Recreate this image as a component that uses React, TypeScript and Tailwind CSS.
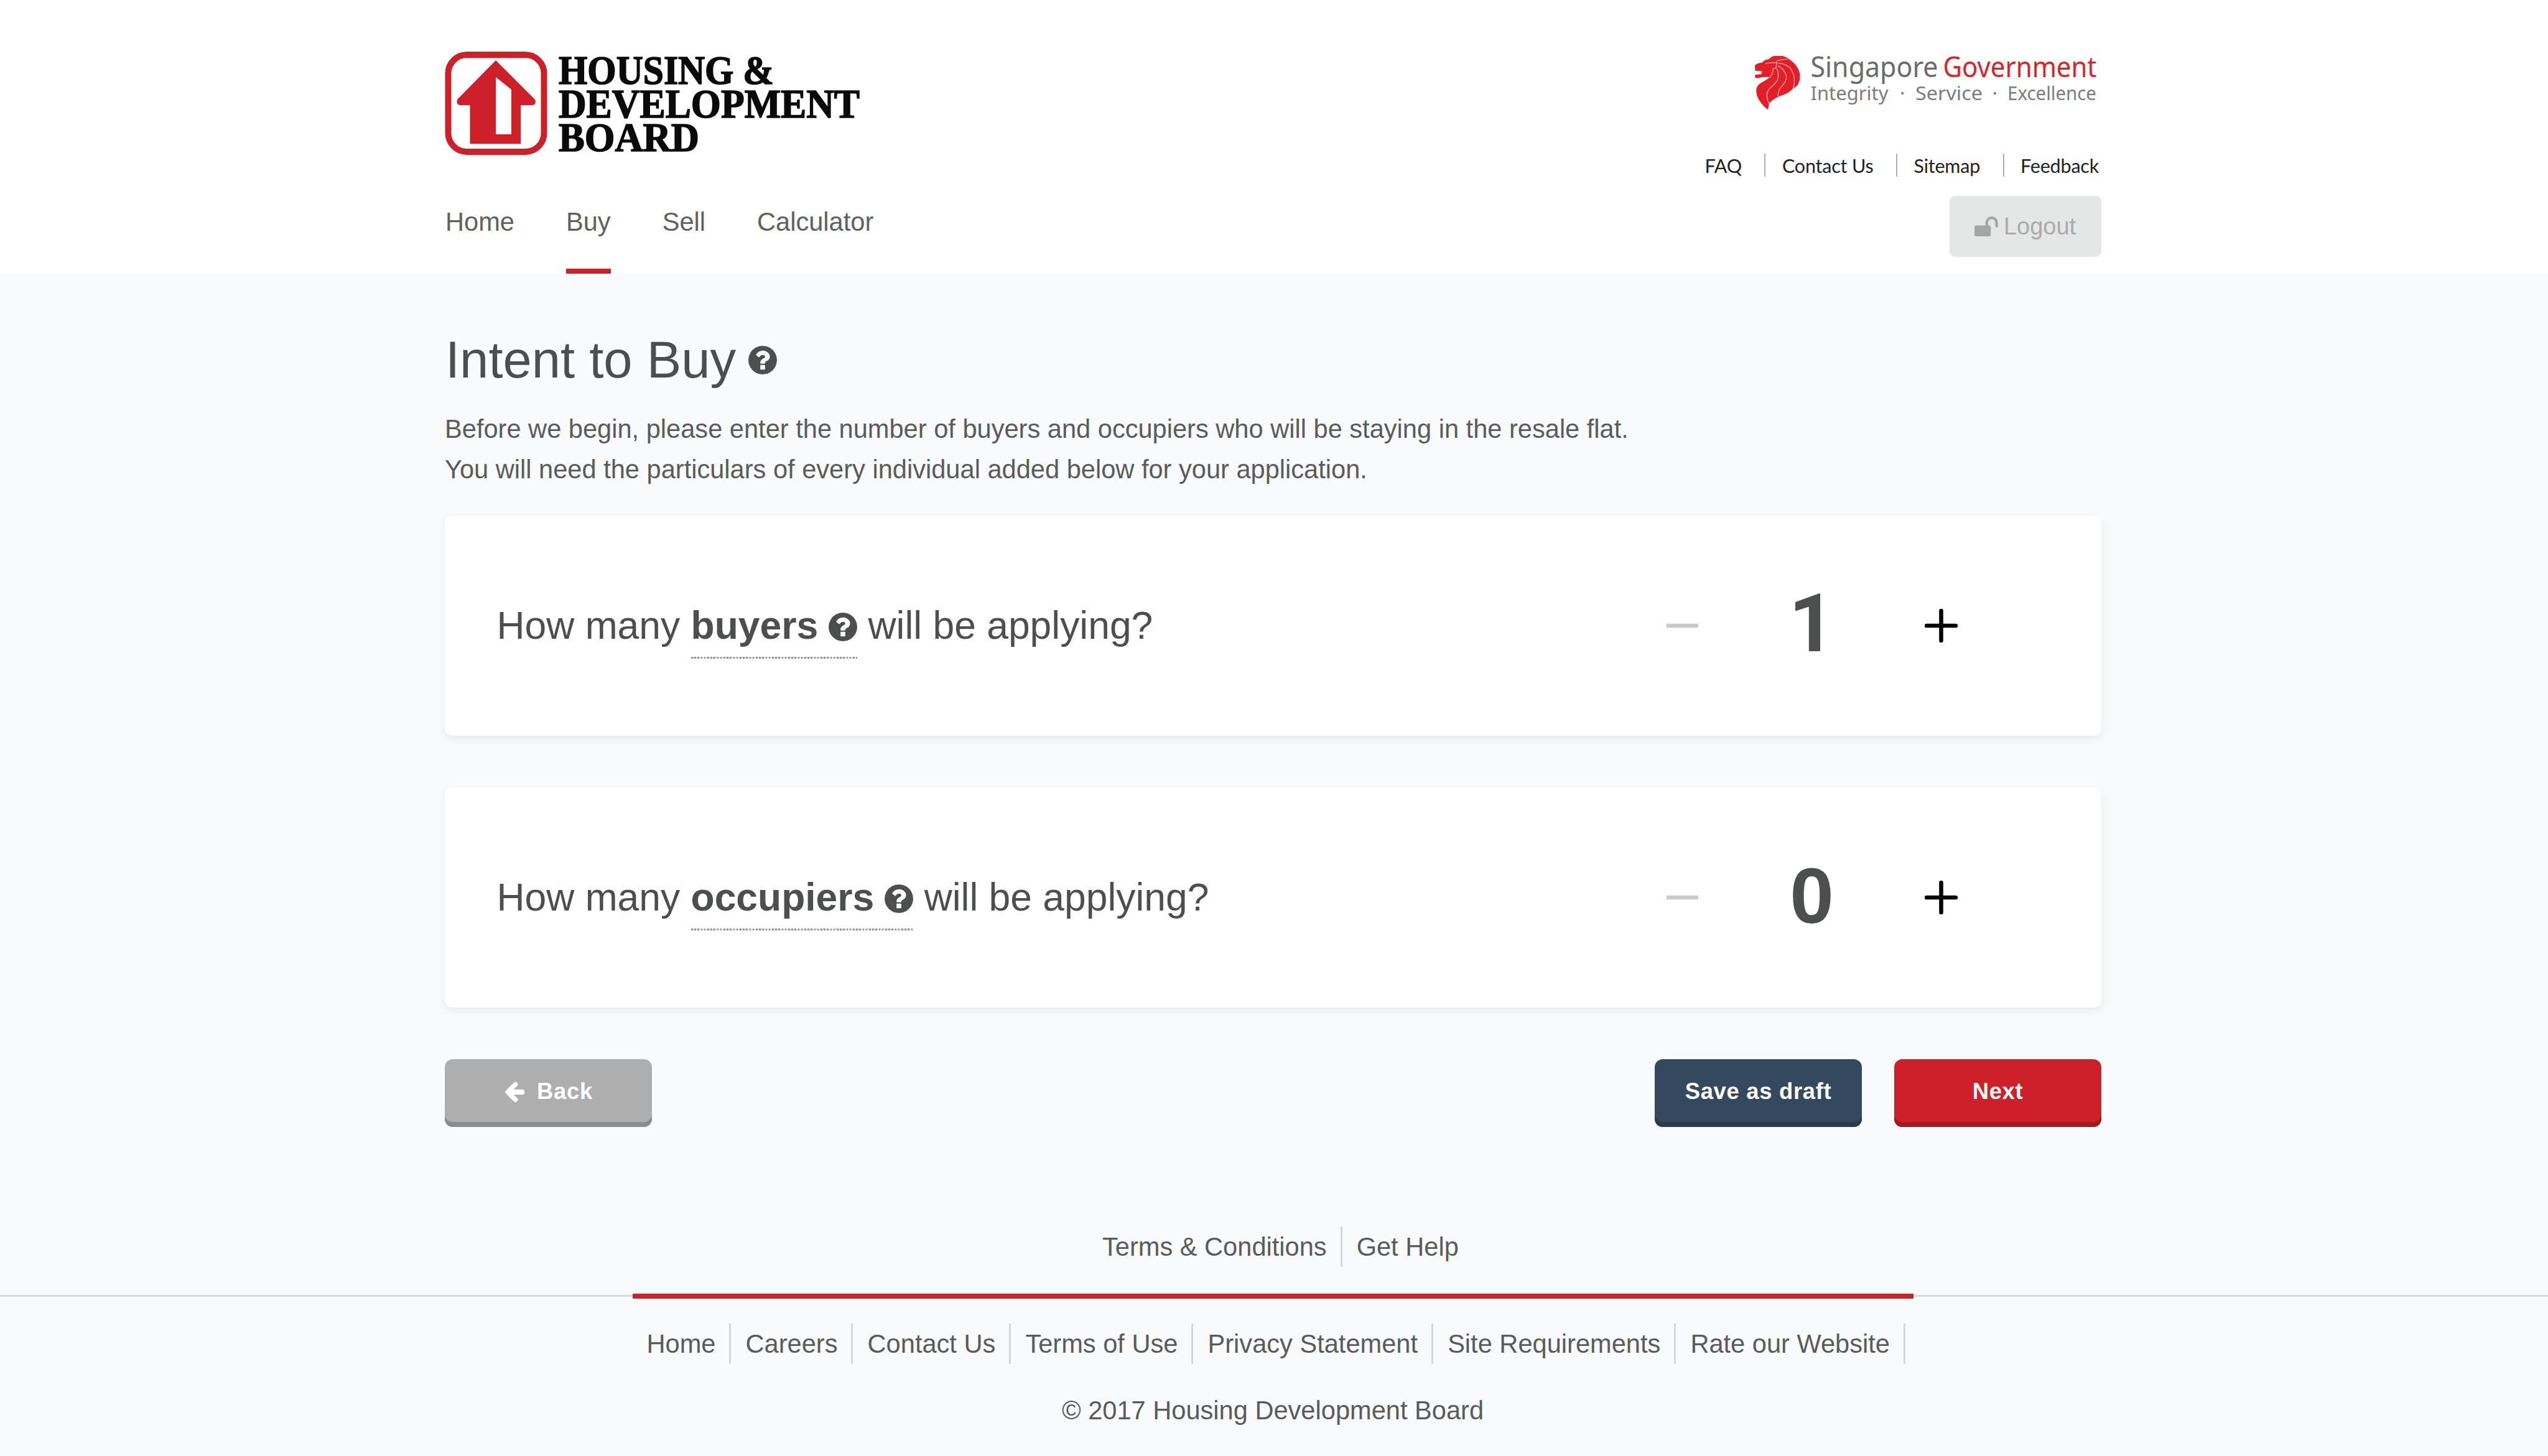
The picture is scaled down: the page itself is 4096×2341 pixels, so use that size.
import React from "react";

const QUESTION_PATH =
  "M1024 1376v-192q0-14-9-23t-23-9h-192q-14 0-23 9t-9 23v192q0 14 9 23t23 9h192q14 0 23-9t9-23zm256-672q0-88-55.5-163t-138.5-116-170-41q-243 0-371 213-15 24 8 42l132 100q7 6 19 6 16 0 25-12 53-68 86-92 34-24 86-24 48 0 85.5 26t37.5 59q0 38-20 61t-68 45q-63 28-115.5 86.5t-52.5 125.5v36q0 14 9 23t23 9h192q14 0 23-9t9-23q0-19 21.5-49.5t54.5-49.5q32-18 49-28.5t46-35 44.5-48 28-60.5 12.5-81zm384 192q0 209-103 385.5t-279.5 279.5-385.5 103-385.5-103-279.5-279.5-103-385.5 103-385.5 279.5-279.5 385.5-103 385.5 103 279.5 279.5 103 385.5z";

function QuestionIcon({ className }: { className: string }) {
  return (
    <svg viewBox="128 128 1536 1536" fill="currentColor" className={className}>
      <path d={QUESTION_PATH} />
    </svg>
  );
}

function HdbLogo() {
  return (
    <svg width="672" height="170" viewBox="0 0 672 170" className="block overflow-visible">
      <rect x="5.500" y="6" width="154" height="156" rx="30" fill="#fff" stroke="#ce2028" strokeWidth="10" />
      <path
        fill="#ce2028"
        fillRule="evenodd"
        d="M82 15 L145 78 Q148 86 141 87 H122 V149 H40.500 V87 H24 Q18 86 20 78 Z M82 42 V134 H107 V62 Z"
      />
      <g fontFamily="'Liberation Serif', serif" fontWeight="700" fontSize="65" fill="#0a0a0a" stroke="#0a0a0a" strokeWidth="1.6">
        <text x="183" y="53" textLength="346" lengthAdjust="spacingAndGlyphs">HOUSING &amp;</text>
        <text x="183" y="107" textLength="484" lengthAdjust="spacingAndGlyphs">DEVELOPMENT</text>
        <text x="183" y="160.500" textLength="226" lengthAdjust="spacingAndGlyphs">BOARD</text>
      </g>
    </svg>
  );
}

function GovernmentLogo() {
  return (
    <svg width="550" height="90" viewBox="0 0 550 90" className="block overflow-visible">
      <g transform="translate(-17.100 -19.200) scale(0.2604)">
        <path
          fill="#e41e26"
          d="M66 134 Q85 120 112 118 Q124 99 152 98 Q170 78 190 78 H238 Q262 84 275 96 Q322 128 334 160 Q346 182 343 218 Q340 248 318 270 L303 275 Q285 305 212 328 Q165 352 153 372 L147 409 Q118 390 100 362 Q72 325 74 284 Q80 256 104 244 Q132 228 160 208 Q120 204 86 213 L67 213 L68 193 L105 190 L110 172 L68 169 Z"
        />
        <g fill="none" stroke="#f29a9d" strokeWidth="6">
          <path d="M130 124 Q170 116 205 120" />
          <path d="M176 154 Q184 176 160 208" />
          <path d="M180 154 L196 152 L202 112" />
          <path d="M200 155 Q216 180 206 224 C190 262 144 268 140 318 Q140 350 154 370" />
          <path d="M208 138 Q250 160 260 200 C262 262 210 254 208 326" />
          <path d="M208 122 Q270 126 292 164 C310 196 316 232 303 274" />
          <path d="M202 108 Q230 96 268 98" />
        </g>
      </g>
      <g fontFamily="'Noto Sans', sans-serif">
        <text x="89.500" y="34.700" fontSize="45" fill="#6a6b6c" textLength="205" lengthAdjust="spacingAndGlyphs">Singapore</text>
        <text x="302.500" y="34.700" fontSize="45" fill="#e41e26" textLength="247" lengthAdjust="spacingAndGlyphs">Government</text>
        <g fontSize="31.500" fill="#7b7c7d">
          <text x="89.500" y="71.500" textLength="125" lengthAdjust="spacingAndGlyphs">Integrity</text>
          <text x="233" y="71.500">·</text>
          <text x="258" y="71.500" textLength="108" lengthAdjust="spacingAndGlyphs">Service</text>
          <text x="381.500" y="71.500">·</text>
          <text x="406" y="71.500" textLength="143" lengthAdjust="spacingAndGlyphs">Excellence</text>
        </g>
      </g>
    </svg>
  );
}

const NAV = ["Home", "Buy", "Sell", "Calculator"];
const QUICK = ["FAQ", "Contact Us", "Sitemap", "Feedback"];
const FOOTER = [
  "Home",
  "Careers",
  "Contact Us",
  "Terms of Use",
  "Privacy Statement",
  "Site Requirements",
  "Rate our Website",
];

function Header() {
  return (
    <header className="h-[440px] bg-white">
      <div className="ml-[715px] flex h-full w-[2663px] justify-between">
        <div className="flex flex-col pt-[82px]">
          <HdbLogo />
          <nav className="mt-[75px] ml-[1px] flex gap-[83px] text-[41.6px] leading-[60px] text-[#606261]">
            {NAV.map((item) => (
              <a key={item} className="flex h-[112.500px] flex-col justify-between">
                {item}
                {item === "Buy" && <span className="h-[8px] bg-[#ce2028]" />}
              </a>
            ))}
          </nav>
        </div>
        <div className="flex flex-col items-end pt-[89px]">
          <div className="mr-[7px]">
            <GovernmentLogo />
          </div>
          <div className="mt-[68px] mr-[4px] flex h-[37px] font-[Lato] text-[30.500px] leading-[39px] tracking-[-0.2px] text-[#222]">
            {QUICK.map((item, i) => (
              <a
                key={item}
                className={
                  i < QUICK.length - 1
                    ? "mr-[26.500px] border-r-[2.600px] border-[#b0b0b0] pr-[36.500px]"
                    : ""
                }
              >
                {item}
              </a>
            ))}
          </div>
          <button className="mt-[31px] flex h-[98px] w-[244px] items-center justify-center gap-[9px] rounded-[9px] bg-[#e5e7e6] pr-[1px] text-[38px] text-[#ababab]">
            <svg viewBox="0 128 1664 1408" fill="#a5a6a5" className="h-[32px] w-[38px]">
              <path d="M1664 576v256q0 26-19 45t-45 19h-64q-26 0-45-19t-19-45v-256q0-106-75-181t-181-75-181 75-75 181v192h96q40 0 68 28t28 68v576q0 40-28 68t-68 28h-960q-40 0-68-28t-28-68v-576q0-40 28-68t68-28h672v-192q0-185 131.500-316.500t316.500-131.500 316.500 131.500 131.500 316.500z" />
            </svg>
            Logout
          </button>
        </div>
      </div>
    </header>
  );
}

function QuestionCard({ subject, value }: { subject: string; value: number }) {
  const digitFont =
    value === 1
      ? "pb-[6px] font-[Roboto] text-[129px]"
      : "pb-[6px] text-[127px]";
  return (
    <section className="flex h-[354px] items-center justify-between rounded-[12px] bg-white pr-[231px] pl-[83.500px] shadow-[0_5px_13px_rgba(0,0,0,0.075)]">
      <div className="flex items-center text-[62.4px] leading-[100px] whitespace-pre text-[#4d4f4e]">
        <span>How many </span>
        <span className="flex h-[100px] flex-col">
          <span className="flex h-[100px] items-center gap-[17px] font-bold">
            {subject}
            <QuestionIcon className="mt-[4px] h-[46px] w-[46px]" />
          </span>
          <span className="h-[3px] shrink-0 bg-[repeating-linear-gradient(90deg,#8f9190_0px,#8f9190_2.6px,#e4e5e5_2.6px,#e4e5e5_5.2px)]" />
        </span>
        <span> will be applying?</span>
      </div>
      <div className="flex items-center">
        <svg viewBox="0 0 53 54" className="h-[54px] w-[53px]">
          <path d="M1 27H52" stroke="#c9cbca" strokeWidth="6.5" />
        </svg>
        <span className={`w-[363px] text-center leading-[130px] font-bold text-[#4d4f4e] ${digitFont}`}>{value}</span>
        <svg viewBox="0 0 53 54" className="h-[54px] w-[53px]">
          <path d="M3 27H50M26.5 3V51" stroke="#050505" strokeWidth="6.600" strokeLinecap="round" />
        </svg>
      </div>
    </section>
  );
}

const BUTTON =
  "flex h-[109px] w-[333px] items-center justify-center rounded-[13px] pb-[4px] text-[36.4px] font-bold tracking-[0.7px] text-white";

function Main() {
  return (
    <main className="ml-[715px] w-[2663px]">
      <h1 className="ml-[1px] flex items-center gap-[20px] pt-[79px] text-[83.2px] leading-[120px] text-[#4d4f4e]">
        Intent to Buy
        <QuestionIcon className="h-[46px] w-[46px]" />
      </h1>
      <p className="mt-[18px] text-[41.6px] leading-[65px] text-[#5a5c5b]">
        Before we begin, please enter the number of buyers and occupiers who will be staying in the resale flat.
        <br />
        You will need the particulars of every individual added below for your application.
      </p>
      <div className="mt-[42px] flex flex-col gap-[83px]">
        <QuestionCard subject="buyers" value={1} />
        <QuestionCard subject="occupiers" value={0} />
      </div>
      <div className="mt-[82.500px] flex justify-between">
        <button className={`${BUTTON} gap-[20px] bg-[#aeaeae] pl-[2px] shadow-[inset_0_-8px_0_#8c8c8c]`}>
          <svg viewBox="192 165 1472 1558" fill="currentColor" className="h-[33px] w-[31px]">
            <path d="M1664 896v128q0 53-32.500 90.500t-84.500 37.500h-704l293 294q38 36 38 90t-38 90l-75 76q-37 37-90 37-52 0-91-37l-651-652q-37-37-37-90 0-52 37-91l651-650q38-38 91-38 52 0 90 38l75 74q38 38 38 91t-38 91l-293 293h704q52 0 84.500 37.500t32.500 90.500z" />
          </svg>
          Back
        </button>
        <div className="flex gap-[52px]">
          <button className={`${BUTTON} bg-[#34495e] shadow-[inset_0_-8px_0_#2a3a4b]`}>Save as draft</button>
          <button className={`${BUTTON} bg-[#ce2028] shadow-[inset_0_-8px_0_#a01a20]`}>Next</button>
        </div>
      </div>
    </main>
  );
}

function Footer() {
  return (
    <footer className="mt-[160px] text-[41.6px] leading-[65px] text-[#5a5c5b]">
      <div className="ml-[1750px] flex">
        <a className="border-r-[3px] border-[#d6d8d7] px-[22px]">Terms &amp; Conditions</a>
        <a className="px-[23px]">Get Help</a>
      </div>
      <div className="mt-[43px] flex h-[8px] items-center">
        <span className="h-[3px] w-[1017px] bg-[#d8d9d9]" />
        <span className="h-[8px] w-[2059px] bg-[#ce2028]" />
        <span className="h-[3px] flex-1 bg-[#d8d9d9]" />
      </div>
      <div className="mt-[40px] ml-[1016px] flex">
        {FOOTER.map((item) => (
          <a key={item} className="border-r-[3px] border-[#d6d8d7] pr-[21.600px] pl-[23.500px]">
            {item}
          </a>
        ))}
      </div>
      <p className="mt-[42px] ml-[715px] w-[2662px] text-center">© 2017 Housing Development Board</p>
    </footer>
  );
}

export default function App() {
  return (
    <div className="h-[2341px] w-[4096px] overflow-hidden bg-[#f9fafc] font-['Liberation_Sans',Arial,sans-serif]">
      <Header />
      <Main />
      <Footer />
    </div>
  );
}
